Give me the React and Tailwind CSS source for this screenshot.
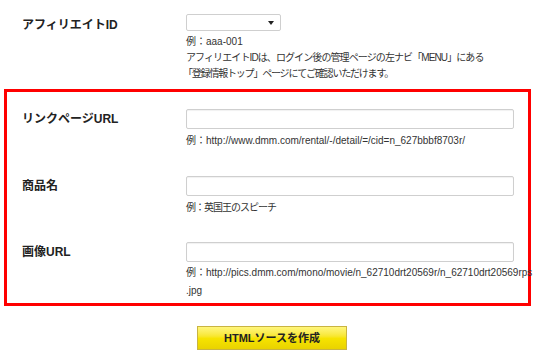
export default function App() {
  const font = { fontFamily: '"Liberation Sans", "Noto Sans CJK JP", sans-serif' }

  return (
    <div className="w-[540px] h-[358px] bg-white text-[#333]" style={font}>
      {/* affiliate id */}
      <div className="flex pt-[14px]">
        <div className="w-[186px] pl-[22px] pt-[3px] text-[12px] leading-[17px] font-bold text-[#222]">
          アフィリエイトID
        </div>
        <div>
          <div className="relative h-[17px] w-[95px] rounded-[2px] border border-[#cfcfcf] bg-white">
            <svg className="absolute right-[6px] top-[6px]" width="6" height="4" viewBox="0 0 6 4">
              <path d="M0 0h6L3 4z" fill="#222" />
            </svg>
          </div>
          <div className="pt-[3px] text-[10px] leading-[16px]">
            <div>例：aaa-001</div>
            <div className="tracking-[-0.9px]">アフィリエイトIDは、ログイン後の管理ページの左ナビ「MENU」にある</div>
            <div className="-ml-[3px] tracking-[-1.2px]">「登録情報トップ」ページにてご確認いただけます。</div>
          </div>
        </div>
      </div>

      {/* red box */}
      <div className="ml-[4px] mt-[7px] h-[217px] w-[527px] border-[3px] border-[#ff0000] pt-[17px]">
        <Row label="リンクページURL">
          <div className="mt-[4px] text-[10px] leading-[16px]">
            例：http://www.dmm.com/rental/-/detail/=/cid=n_627bbbf8703r/
          </div>
        </Row>
        <div className="mt-[27px]">
          <Row label="商品名">
            <div className="mt-[4px] text-[10px] leading-[16px] tracking-[-1px]">例：英国王のスピーチ</div>
          </Row>
        </div>
        <div className="mt-[26px]">
          <Row label="画像URL">
            <div className="mt-[2px] whitespace-nowrap text-[10px] leading-[18px]">
              <div>例：http://pics.dmm.com/mono/movie/n_62710drt20569r/n_62710drt20569rps</div>
              <div>.jpg</div>
            </div>
          </Row>
        </div>
      </div>

      {/* submit */}
      <div className="ml-[197px] mt-[20px] flex h-[24px] w-[150px] items-center justify-center border border-[#c9b441] bg-gradient-to-b from-[#fff67a] via-[#f7e400] to-[#e9d300] text-[11px] font-bold text-[#222]">
        HTMLソースを作成
      </div>
    </div>
  )
}

function Row({ label, children }) {
  return (
    <div className="flex">
      <div className="flex h-[20px] w-[179px] shrink-0 items-center pl-[15px] text-[12px] font-bold text-[#222]">
        {label}
      </div>
      <div>
        <div className="h-[20px] w-[328px] rounded-[2px] border border-[#cfcfcf] bg-white shadow-[inset_0_1px_1px_rgba(0,0,0,0.06)]" />
        {children}
      </div>
    </div>
  )
}
